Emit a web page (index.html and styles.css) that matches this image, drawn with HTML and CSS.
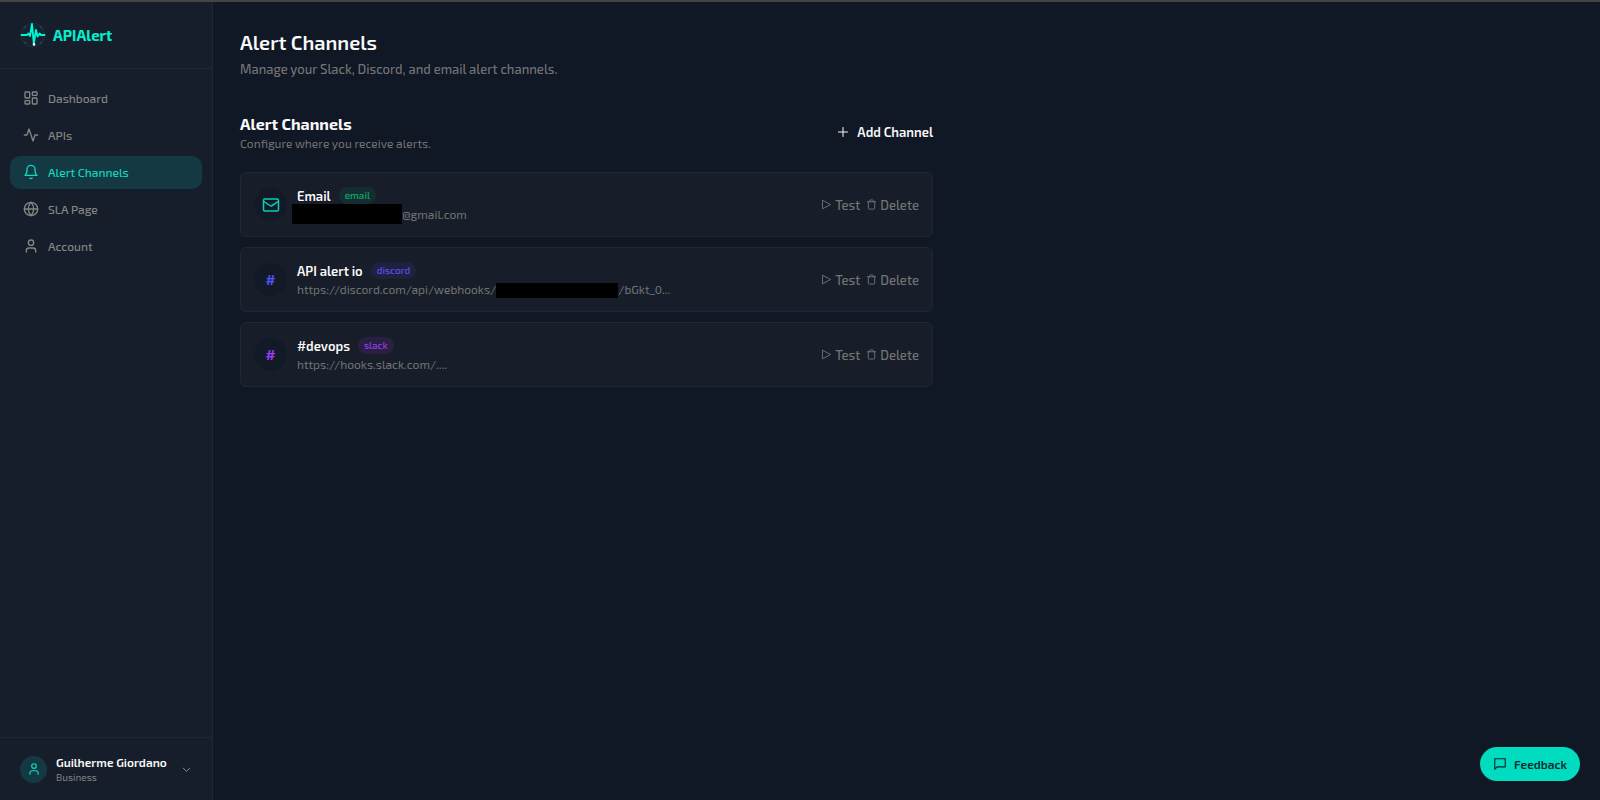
FILE: index.html
```html
<!DOCTYPE html>
<html lang="en">

<head>
    <meta charset="UTF-8" />
    <meta name="viewport" content="width=device-width, initial-scale=1.0" />
    <title>Alert Channels - APIAlert</title>
    <link rel="stylesheet" href="styles.css">
</head>

<body>

    <aside class="sidebar">
        <a class="brand" href="#">
            <svg class="brand-logo" viewBox="0 0 26 26" fill="none">
                <circle cx="13" cy="13" r="12" fill="#14242f" stroke="#1b3a43" stroke-width="0.6" />
                <path d="M4 6.5l2-2.2M22 6.5l-2-2.2M4 19.5l2 2.2M22 19.5l-2 2.2" stroke="#12857f" stroke-width="0.8" />
                <path d="M1.500 13H7l1.300-1.500L10 14l2-12 1.800 19.500L16 8l1.600 6.500 2-3 1.400 1.500h3.500" stroke="#00f5d4" stroke-width="1.9" stroke-linejoin="round" stroke-linecap="round" />
                <circle cx="14" cy="22.4" r="1.3" fill="#e9fffb" />
            </svg>
            <span>APIAlert</span>
        </a>

        <nav class="nav">
            <a class="nav-item" href="#">
                <svg class="icon" viewBox="0 0 24 24"><rect x="3" y="3" width="7" height="9" rx="1" /><rect x="14" y="3" width="7" height="5" rx="1" /><rect x="14" y="12" width="7" height="9" rx="1" /><rect x="3" y="16" width="7" height="5" rx="1" /></svg>
                Dashboard
            </a>
            <a class="nav-item" href="#">
                <svg class="icon" viewBox="0 0 24 24"><path d="M22 12h-4l-3 9L9 3l-3 9H2" /></svg>
                APIs
            </a>
            <a class="nav-item active" href="#">
                <svg class="icon" viewBox="0 0 24 24"><path d="M6 8a6 6 0 0 1 12 0c0 7 3 9 3 9H3s3-2 3-9" /><path d="M10.3 21a1.94 1.94 0 0 0 3.4 0" /></svg>
                Alert Channels
            </a>
            <a class="nav-item" href="#">
                <svg class="icon" viewBox="0 0 24 24"><circle cx="12" cy="12" r="10" /><path d="M12 2a14.5 14.5 0 0 0 0 20 14.5 14.5 0 0 0 0-20" /><path d="M2 12h20" /></svg>
                SLA Page
            </a>
            <a class="nav-item" href="#">
                <svg class="icon" viewBox="0 0 24 24"><circle cx="12" cy="7" r="4" /><path d="M19 21v-2a4 4 0 0 0-4-4H9a4 4 0 0 0-4 4v2" /></svg>
                Account
            </a>
        </nav>

        <button class="user" type="button">
            <span class="avatar">
                <svg class="icon" viewBox="0 0 24 24"><circle cx="12" cy="7" r="4" /><path d="M19 21v-2a4 4 0 0 0-4-4H9a4 4 0 0 0-4 4v2" /></svg>
            </span>
            <span class="user-info">
                <span class="user-name">Guilherme Giordano</span>
                <span class="user-plan">Business</span>
            </span>
            <svg class="icon chevron" viewBox="0 0 24 24"><path d="M5 9l7 7 7-7" /></svg>
        </button>
    </aside>

    <main class="main">
        <h1>Alert Channels</h1>
        <p class="subtitle">Manage your Slack, Discord, and email alert channels.</p>

        <section class="channels">
            <div class="channels-header">
                <div>
                    <h2>Alert Channels</h2>
                    <p class="hint">Configure where you receive alerts.</p>
                </div>
                <button class="add-btn" type="button">
                    <svg class="icon" viewBox="0 0 24 24"><path d="M3 12h18M12 3v18" /></svg>
                    Add Channel
                </button>
            </div>

            <ul class="channel-list">
                <li class="channel email">
                    <span class="channel-icon">
                        <svg class="icon" viewBox="0 0 24 24"><rect x="2" y="4" width="20" height="16" rx="2" /><path d="M2 7l8.9 6a2 2 0 0 0 2.2 0L22 7" /></svg>
                    </span>
                    <div class="channel-info">
                        <div class="channel-title">
                            <h3>Email</h3>
                            <span class="tag">email</span>
                        </div>
                        <p class="channel-target"><span class="redacted redacted-email"></span>@gmail.com</p>
                    </div>
                    <div class="actions">
                        <button type="button"><svg class="icon" viewBox="0 0 24 24"><path d="M4 3l17 9-17 9z" /></svg>Test</button>
                        <button type="button"><svg class="icon" viewBox="0 0 24 24"><path d="M3 6h18M19 6v14a2 2 0 0 1-2 2H7a2 2 0 0 1-2-2V6M8 6V4a2 2 0 0 1 2-2h4a2 2 0 0 1 2 2v2" /></svg>Delete</button>
                    </div>
                </li>
                <li class="channel discord">
                    <span class="channel-icon">#</span>
                    <div class="channel-info">
                        <div class="channel-title">
                            <h3>API alert io</h3>
                            <span class="tag">discord</span>
                        </div>
                        <p class="channel-target">https://discord.com/api/webhooks/<span class="redacted redacted-hook"></span>/bGkt_0...</p>
                    </div>
                    <div class="actions">
                        <button type="button"><svg class="icon" viewBox="0 0 24 24"><path d="M4 3l17 9-17 9z" /></svg>Test</button>
                        <button type="button"><svg class="icon" viewBox="0 0 24 24"><path d="M3 6h18M19 6v14a2 2 0 0 1-2 2H7a2 2 0 0 1-2-2V6M8 6V4a2 2 0 0 1 2-2h4a2 2 0 0 1 2 2v2" /></svg>Delete</button>
                    </div>
                </li>
                <li class="channel slack">
                    <span class="channel-icon">#</span>
                    <div class="channel-info">
                        <div class="channel-title">
                            <h3>#devops</h3>
                            <span class="tag">slack</span>
                        </div>
                        <p class="channel-target">https://hooks.slack.com/....</p>
                    </div>
                    <div class="actions">
                        <button type="button"><svg class="icon" viewBox="0 0 24 24"><path d="M4 3l17 9-17 9z" /></svg>Test</button>
                        <button type="button"><svg class="icon" viewBox="0 0 24 24"><path d="M3 6h18M19 6v14a2 2 0 0 1-2 2H7a2 2 0 0 1-2-2V6M8 6V4a2 2 0 0 1 2-2h4a2 2 0 0 1 2 2v2" /></svg>Delete</button>
                    </div>
                </li>
            </ul>
        </section>
    </main>

    <button class="feedback" type="button">
        <svg class="icon" viewBox="0 0 24 24"><path d="M21 3v14H7l-4 4V3z" /></svg>
        Feedback
    </button>

</body>

</html>
```

FILE: styles.css
```css
* {
    box-sizing: border-box;
}

body {
    font-family: "Exo 2", Roboto, sans-serif;
    font-size: 12px;
    background: #101725;
    color: #fafafa;
    margin: 0;
    border-top: 2px solid #444444;
    display: flex;
    min-height: 100vh;
}

h1,
h2,
h3,
p {
    margin: 0;
}

button {
    font-family: inherit;
    color: inherit;
    background: none;
    border: none;
    padding: 0;
    cursor: pointer;
}

a {
    color: inherit;
    text-decoration: none;
}

.icon {
    width: 16px;
    height: 16px;
    flex-shrink: 0;
    fill: none;
    stroke: currentColor;
    stroke-width: 2;
    stroke-linecap: round;
    stroke-linejoin: round;
}

/* Sidebar */
.sidebar {
    width: 213px;
    flex-shrink: 0;
    display: flex;
    flex-direction: column;
    background: #171e2b;
    border-right: 1px solid #202735;
}

.brand {
    display: flex;
    align-items: center;
    gap: 7px;
    height: 67px;
    padding: 0 20px;
    border-bottom: 1px solid #202735;
    color: #00f0d0;
    font-size: 15px;
    font-weight: 700;
}

.brand-logo {
    width: 26px;
    height: 26px;
}

.nav {
    flex: 1;
    display: flex;
    flex-direction: column;
    gap: 4px;
    padding: 13px 10px;
}

.nav-item {
    display: flex;
    align-items: center;
    gap: 9px;
    height: 33px;
    padding: 0 13px 1px;
    border-radius: 10px;
    color: #858585;
    font-weight: 500;
}

.nav-item.active {
    background: #153942;
    color: #0fd8c0;
}

.user {
    display: flex;
    align-items: center;
    gap: 9px;
    height: 63px;
    padding: 0 20px;
    border-top: 1px solid #202735;
    text-align: left;
}

.avatar {
    display: grid;
    place-items: center;
    width: 27px;
    height: 27px;
    border-radius: 50%;
    background: #153942;
    color: #0fd8c0;
}

.avatar .icon {
    width: 14px;
    height: 14px;
}

.user-info {
    flex: 1;
    display: flex;
    flex-direction: column;
}

.user-name {
    font-size: 12px;
    line-height: 16px;
    font-weight: 600;
}

.user-plan {
    font-size: 10px;
    line-height: 14px;
    color: #808080;
}

.user .chevron {
    width: 11px;
    height: 11px;
    color: #999999;
}

/* Content */
.main {
    flex: 1;
    padding: 26px 27px;
}

h1 {
    font-size: 20px;
    line-height: 28px;
    font-weight: 600;
}

.subtitle {
    font-size: 13px;
    line-height: 26px;
    font-weight: 500;
    color: #747474;
}

.channels {
    max-width: 693px;
    margin-top: 32px;
}

.channels-header {
    display: flex;
    align-items: center;
    justify-content: space-between;
    margin-bottom: 20px;
}

h2 {
    font-size: 16px;
    line-height: 20px;
    font-weight: 700;
}

.hint {
    line-height: 18px;
    color: #747474;
}

.add-btn {
    display: flex;
    align-items: center;
    gap: 8px;
    padding-bottom: 3px;
    font-size: 13px;
    font-weight: 600;
}

.add-btn .icon {
    width: 12px;
    height: 12px;
}

.channel-list {
    list-style: none;
    margin: 0;
    padding: 0;
    display: flex;
    flex-direction: column;
    gap: 10px;
}

.channel {
    display: flex;
    align-items: center;
    gap: 10px;
    height: 65px;
    padding: 0 13px;
    background: #171e2a;
    border: 1px solid #202734;
    border-radius: 6px;
}

.channel-icon {
    display: grid;
    place-items: center;
    width: 33px;
    height: 33px;
    border-radius: 50%;
    background: #131a27;
    font-size: 14px;
    font-weight: 700;
}

.channel-icon .icon {
    width: 18px;
    height: 18px;
}

.channel-info {
    flex: 1;
}

.channel-title {
    display: flex;
    align-items: center;
    gap: 8px;
}

h3 {
    font-size: 13px;
    line-height: 18px;
    font-weight: 600;
}

.tag {
    padding: 0 6px;
    border-radius: 9px;
    font-size: 10px;
    line-height: 17px;
    font-weight: 500;
}

.email .channel-icon {
    color: #08cdb7;
}

.email .tag {
    background: #152d32;
    color: #10b06c;
}

.discord .channel-icon {
    color: #5550f5;
}

.discord .tag {
    background: #20213f;
    color: #5a53f0;
}

.slack .channel-icon {
    color: #9c3df5;
}

.slack .tag {
    background: #291f40;
    color: #9a3df0;
}

.channel-target {
    display: flex;
    align-items: center;
    height: 18px;
    color: #747474;
}

.redacted {
    background: #000000;
}

/* slightly taller and wider than the hidden address */
.redacted-email {
    width: 110px;
    height: 20px;
    margin-left: -5px;
}

.redacted-hook {
    width: 122px;
    height: 15px;
    align-self: flex-end;
}

.actions {
    display: flex;
    gap: 6px;
    color: #747474;
}

.actions button {
    display: flex;
    align-items: center;
    gap: 3px;
    font-size: 13px;
    font-weight: 500;
}

.actions .icon {
    width: 11px;
    height: 11px;
}

.feedback {
    position: fixed;
    right: 20px;
    bottom: 19px;
    display: flex;
    align-items: center;
    gap: 7px;
    height: 34px;
    padding: 0 13px;
    border-radius: 17px;
    background: #00dcc0;
    color: #0c2a30;
    font-size: 12px;
    font-weight: 600;
}

.feedback .icon {
    width: 14px;
    height: 14px;
}
```
